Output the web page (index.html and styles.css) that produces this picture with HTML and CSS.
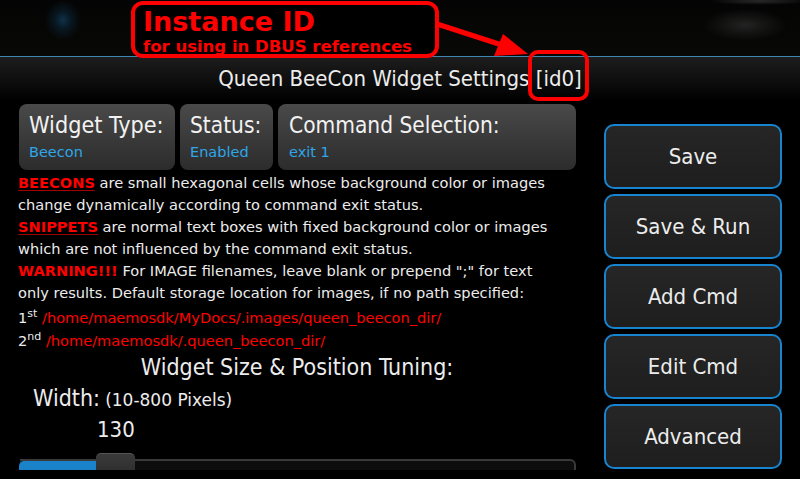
FILE: index.html
```html
<!DOCTYPE html>
<html>
<head>
<meta charset="utf-8">
<link rel="stylesheet" href="styles.css">
</head>
<body>
<div class="screen">
  <div class="topbar"></div>
  <div class="titlebar">
    <h1 class="title">Queen BeeCon Widget Settings [id0]</h1>
  </div>
  <div class="content">
    <div class="left">
      <div class="pickers">
        <div class="picker p-type">
          <div class="p-label">Widget Type:</div>
          <div class="p-value">Beecon</div>
        </div>
        <div class="picker p-status">
          <div class="p-label">Status:</div>
          <div class="p-value">Enabled</div>
        </div>
        <div class="picker p-cmd">
          <div class="p-label">Command Selection:</div>
          <div class="p-value">exit 1</div>
        </div>
      </div>
      <div class="info">
        <p><span class="kw">BEECONS</span> are small hexagonal cells whose background color or images<br>change dynamically according to command exit status.</p>
        <p><span class="kw">SNIPPETS</span> are normal text boxes with fixed background color or images<br>which are not influenced by the command exit status.</p>
        <p><span class="warn">WARNING!!!</span> For IMAGE filenames, leave blank or prepend ";" for text<br>only results. Default storage location for images, if no path specified:</p>
        <p class="path first">1<sup>st</sup> <span class="red">/home/maemosdk/MyDocs/.images/queen_beecon_dir/</span></p>
        <p class="path">2<sup>nd</sup> <span class="red">/home/maemosdk/.queen_beecon_dir/</span></p>
      </div>
      <div class="section">Widget Size &amp; Position Tuning:</div>
      <div class="width-row"><span class="w-label">Width:</span> <span class="w-range">(10-800 Pixels)</span></div>
      <div class="w-value">130</div>
      <div class="slider">
        <div class="fill"></div>
        <div class="thumb"></div>
      </div>
    </div>
    <div class="buttons">
      <div class="btn">Save</div>
      <div class="btn">Save &amp; Run</div>
      <div class="btn">Add Cmd</div>
      <div class="btn">Edit Cmd</div>
      <div class="btn">Advanced</div>
    </div>
  </div>

  <div class="note">
    <div class="note-title">Instance ID</div>
    <div class="note-sub">for using in DBUS references</div>
  </div>
  <svg class="arrow" width="800" height="110" viewBox="0 0 800 110">
    <line x1="437" y1="24" x2="505" y2="46" stroke="#ff0000" stroke-width="5"/>
    <polygon points="528,54 494,56 503,34" fill="#ff0000"/>
  </svg>
  <div class="idbox"></div>
</div>
</body>
</html>
```
FILE: styles.css
```css
* { box-sizing: border-box; }
html, body { margin: 0; padding: 0; background: #000; }
body {
  font-family: "DejaVu Sans", "Open Sans", sans-serif;
  color: #ececec;
}
.screen {
  position: relative;
  width: 800px;
  height: 479px;
  overflow: hidden;
  background: #000;
}
.topbar {
  height: 57px;
  border-bottom: 1px solid #3d86b0;
  background:
    radial-gradient(ellipse 18px 20px at 63px 20px, #0f3148 0%, rgba(10,35,52,0.6) 45%, rgba(0,0,0,0) 100%),
    radial-gradient(ellipse 42px 16px at 745px 25px, #232323 0%, rgba(30,30,30,0.5) 55%, rgba(0,0,0,0) 100%),
    radial-gradient(ellipse 50px 4px at 760px 1px, #2a2a2a 0%, rgba(0,0,0,0) 100%),
    linear-gradient(#040404, #080806);
}
.titlebar {
  height: 44px;
  background: linear-gradient(#1d1d1d 0%, #0c0c0c 60%, #000 100%);
  display: flex;
  justify-content: center;
  align-items: flex-start;
}
.title {
  margin: 8px 0 0 0;
  font-family: "DejaVu Sans Condensed", "DejaVu Sans", sans-serif;
  font-weight: 400;
  font-size: 22px;
  line-height: 28px;
  color: #ececec;
}
.content {
  display: flex;
  height: 369px;
  overflow: hidden;
}
.left {
  width: 576px;
  padding-left: 18px;
  padding-top: 3px;
  display: flex;
  flex-direction: column;
}
.pickers {
  display: flex;
  gap: 5px;
  margin-left: 1px;
}
.picker {
  height: 66px;
  border-radius: 8px;
  background: linear-gradient(#4a4a4a 0%, #3a3a3a 50%, #2c2c2c 100%);
  padding: 7px 0 0 10px;
  white-space: nowrap;
}
.p-type { width: 156px; }
.p-status { width: 93px; }
.p-cmd { width: 298px; padding-left: 11px; }
.p-label {
  font-family: "DejaVu Sans Condensed", "DejaVu Sans", sans-serif;
  font-size: 22.5px;
  line-height: 28px;
  color: #f2f2f2;
}
.p-type .p-label { font-size: 23.2px; }
.p-value {
  font-size: 14.5px;
  line-height: 20px;
  color: #2ea6e8;
  margin-top: 3px;
}
.info {
  margin-top: 2px;
  font-size: 14.6px;
  line-height: 22px;
  color: #ececec;
  white-space: nowrap;
}
.info p { margin: 0; }
.kw {
  color: #ff0000;
  font-weight: 700;
  text-decoration: underline;
  text-decoration-color: #a00000;
  text-underline-offset: 2px;
}
.warn { color: #ff0000; font-weight: 700; }
.red { color: #ff0000; }
.path { line-height: 23px; height: 23px; }
.path.first { margin-top: 2px; }
.path sup { font-size: 11px; line-height: 0; vertical-align: 6px; }
.section {
  font-family: "DejaVu Sans Condensed", "DejaVu Sans", sans-serif;
  font-size: 23px;
  line-height: 26px;
  margin-top: 2px;
  text-align: center;
  width: 558px;
  white-space: nowrap;
}
.width-row {
  margin-top: 5px;
  padding-left: 15px;
  line-height: 26px;
  height: 26px;
  white-space: nowrap;
}
.w-label {
  font-family: "DejaVu Sans Condensed", "DejaVu Sans", sans-serif;
  font-size: 23px;
}
.w-range { font-size: 17px; }
.w-value {
  margin-top: 6px;
  padding-left: 79px;
  font-family: "DejaVu Sans Condensed", "DejaVu Sans", sans-serif;
  font-size: 22px;
  line-height: 26px;
}
.slider {
  position: relative;
  margin-top: 16px;
  margin-left: 2px;
  width: 556px;
  height: 20px;
  flex: none;
  background: #0d0d0d;
  border-top: 2px solid #3a3a3a;
  border-right: 2px solid #3a3a3a;
  border-radius: 0 6px 0 0;
}
.fill {
  position: absolute;
  left: -1px;
  top: 0;
  width: 77px;
  height: 18px;
  background: #1a82c8;
  border-radius: 5px 0 0 0;
}
.thumb {
  position: absolute;
  left: 76px;
  top: -8px;
  width: 39px;
  height: 26px;
  background: linear-gradient(#3a3a3a, #2a2a2a);
  border-radius: 5px 5px 0 0;
  border-top: 1px solid #555;
}
.buttons {
  margin-left: 28px;
  padding-top: 23px;
  display: flex;
  flex-direction: column;
  gap: 5px;
}
.btn {
  width: 178px;
  height: 65px;
  flex: none;
  border: 2px solid #1884d0;
  border-radius: 10px;
  background: linear-gradient(#262626, #1e1e1e);
  display: flex;
  align-items: center;
  justify-content: center;
  font-family: "DejaVu Sans Condensed", "DejaVu Sans", sans-serif;
  font-size: 22px;
  color: #ececec;
}
.note {
  position: absolute;
  left: 131px;
  top: 1px;
  width: 308px;
  height: 57px;
  border: 4px solid #ff0000;
  border-radius: 12px;
  background: #000;
  padding: 2px 0 0 8px;
  color: #ff0000;
  font-weight: 700;
  white-space: nowrap;
}
.note-title { font-size: 27px; line-height: 30px; }
.note-sub { font-size: 16.5px; line-height: 19px; }
.arrow { position: absolute; left: 0; top: 0; }
.idbox {
  position: absolute;
  left: 528px;
  top: 50px;
  width: 61px;
  height: 51px;
  border: 4px solid #ff0000;
  border-radius: 10px;
}
```
